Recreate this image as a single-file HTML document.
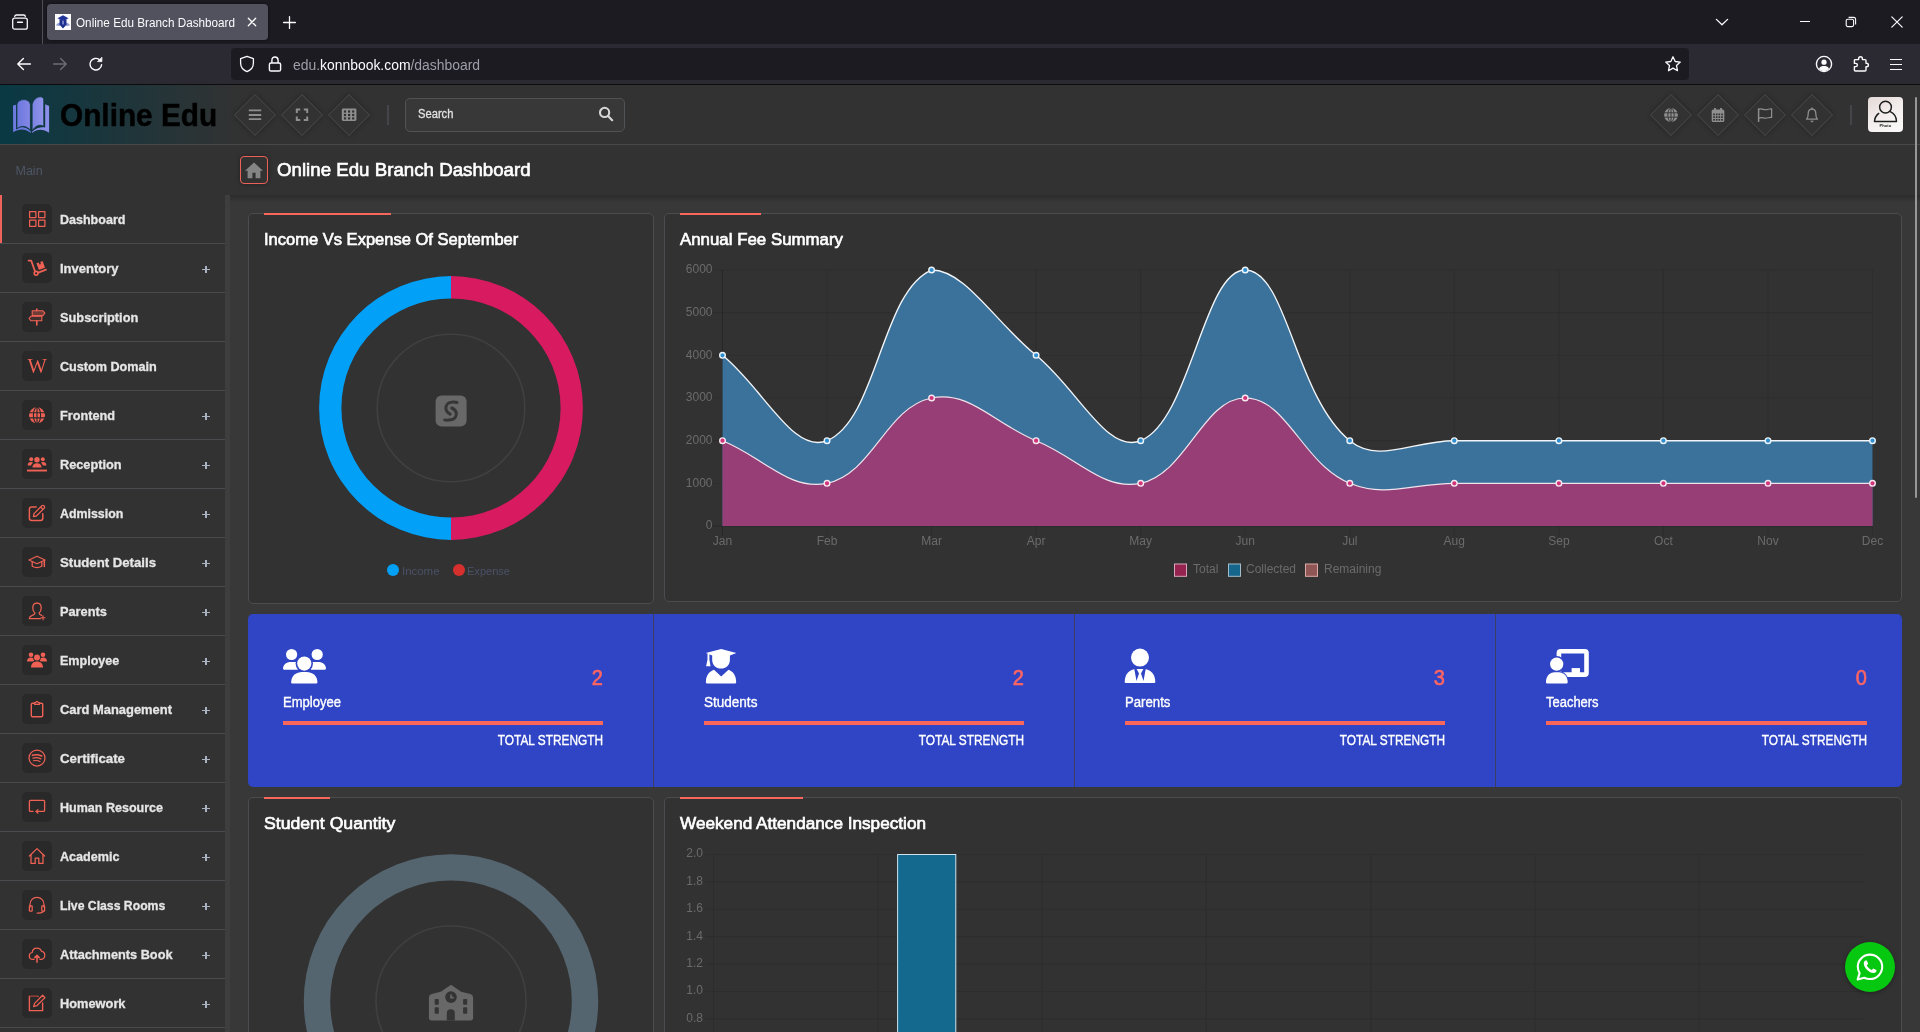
<!DOCTYPE html>
<html>
<head>
<meta charset="utf-8">
<title>Online Edu Branch Dashboard</title>
<style>
*{box-sizing:border-box;margin:0;padding:0}
html,body{width:1920px;height:1032px;overflow:hidden;background:#323232;font-family:"Liberation Sans",sans-serif;color:#fff}
.abs{position:absolute}
#root{position:relative;width:1920px;height:1032px;overflow:hidden;will-change:transform}
/* ---------- browser chrome ---------- */
#tabbar{left:0;top:0;width:1920px;height:44px;background:#1c1b22}
#tab{left:47px;top:4px;width:221px;height:36px;background:#52525e;border-radius:4px;box-shadow:0 0 3px rgba(0,0,0,.55)}
#tabtitle{left:76px;top:15px;font-size:12px;line-height:16px;color:#fbfbfe;white-space:nowrap;transform-origin:0 50%;transform:scaleX(.977)}
#navbar{left:0;top:44px;width:1920px;height:40px;background:#2b2a33}
#chromeline{left:0;top:84px;width:1920px;height:1px;background:#0c0c0d}
#urlbar{left:231px;top:48px;width:1458px;height:32px;background:#1c1b22;border-radius:4px}
#url{left:293px;top:56px;font-size:14px;line-height:18px;color:#9e9ea8;white-space:nowrap;transform-origin:0 50%;transform:scaleX(.993)}
#url b{font-weight:normal;color:#fbfbfe}
/* ---------- app ---------- */
#hdr{left:0;top:85px;width:1920px;height:59px;background:#323232}
#hdrgrad{left:0;top:85px;width:240px;height:59px;background:linear-gradient(90deg,#093944 0%,#323232 100%)}
#hdrline{left:0;top:144px;width:1920px;height:1px;background:#484848}
#side{left:0;top:145px;width:225px;height:887px;background:#323232}
#strip{left:225px;top:195px;width:5px;height:837px;background:#3e3e3e}
#subhdr{left:225px;top:145px;width:1695px;height:50px;background:#323232}
#content{left:230px;top:195px;width:1690px;height:837px;background:#383838}
#contentshadow{left:230px;top:195px;width:1690px;height:8px;background:linear-gradient(180deg,rgba(0,0,0,.22),rgba(0,0,0,0))}
.card{background:#323232;border:1px solid #4a4c50;border-radius:5px}
.accent{height:2px;background:#f8675b}
.ctitle{font-size:17.5px;font-weight:bold;color:#fff;white-space:nowrap;line-height:20px;transform-origin:0 50%}
.mi{left:0;width:225px;height:49px;border-bottom:1px solid #4a4b4f}
.mi .ib{position:absolute;left:22px;top:9px;width:30px;height:30px;border-radius:5px;background:#292929}
.mi .lb{position:absolute;left:60px;top:16px;font-size:13px;line-height:18px;font-weight:bold;color:#e6e6e6;-webkit-text-stroke:0.3px #e6e6e6;white-space:nowrap;transform-origin:0 50%}
.mi .pl{position:absolute;left:202px;top:22px;width:8px;height:7px}
.mi .pl:before{content:"";position:absolute;left:0;top:2.9px;width:8.2px;height:1.4px;background:#a9b3c2}
.mi .pl:after{content:"";position:absolute;left:3px;top:0;width:2px;height:7.2px;background:#a9b3c2}
.dia{width:30px;height:30px;border:1.4px solid #434343;transform:rotate(45deg);box-shadow:0 0 5px rgba(0,0,0,.3);background:#323232}
.ax{font-size:12px;line-height:14px;color:#6b6b6b;white-space:nowrap}
.stat{top:614px;height:172px;background:#2f44c4}
.slabel{font-size:14px;font-weight:bold;color:#fff;white-space:nowrap;line-height:16px;transform-origin:0 50%}
.snum{font-size:22px;color:#ff5b5c;white-space:nowrap;line-height:24px;text-align:right}
.sbar{height:4px;background:#ff5b5c;width:320px;top:720px}
.stot{font-size:14px;font-weight:bold;color:#fff;white-space:nowrap;line-height:16px;text-align:right;transform-origin:100% 50%}
</style>
</head>
<body>
<div id="root">
<!-- BROWSER CHROME -->
<div id="tabbar" class="abs"></div>
<div id="tab" class="abs"></div>
<div id="tabtitle" class="abs">Online Edu Branch Dashboard</div>
<div id="navbar" class="abs"></div>
<div id="urlbar" class="abs"></div>
<div id="url" class="abs">edu.<b>konnbook.com</b>/dashboard</div>
<div id="chromeline" class="abs"></div>
<svg class="abs" style="left:10px;top:12px" width="20" height="20" viewBox="0 0 20 20" fill="none" stroke="#fbfbfe" stroke-width="1.3" stroke-linecap="round"><path d="M4.7 4.5 C4.7 3.5 5.4 3 6.4 3 H13.6 C14.6 3 15.3 3.5 15.3 4.5"/><rect x="2.7" y="6.2" width="14.6" height="11" rx="2"/><path d="M7.6 10.2 H12.4" stroke-width="1.5"/></svg>
<div class="abs" style="left:42px;top:0;width:1px;height:44px;background:#4f4e58"></div>
<svg class="abs" style="left:55px;top:14px" width="16" height="16" viewBox="0 0 16 16"><rect width="16" height="16" fill="#fdfdff"/><path d="M1 11.6 C2 9 3.6 8.4 5.4 9.6 L5 12 Z M15 11.6 C14 9 12.4 8.4 10.6 9.6 L11 12 Z" fill="#8f9cd6"/><path d="M8 1.3 L13.5 4.2 L8 7 L2.5 4.2 Z" fill="#1f3398"/><path d="M4.6 5 L8 6.8 L11.4 5 L11.6 10.6 L8 14.4 L4.4 10.6 Z" fill="#1c2f8f"/><rect x="7.3" y="6.8" width="1.5" height="3.8" rx="0.7" fill="#8c9ad8"/></svg>
<svg class="abs" style="left:245px;top:15px" width="14" height="14" viewBox="0 0 14 14" stroke="#fbfbfe" stroke-width="1.3" stroke-linecap="round"><path d="M3.3 3.3 L10.7 10.7 M10.7 3.3 L3.3 10.7"/></svg>
<svg class="abs" style="left:282px;top:15px" width="15" height="15" viewBox="0 0 15 15" stroke="#fbfbfe" stroke-width="1.3" stroke-linecap="round"><path d="M7.5 1.6 V13.4 M1.6 7.5 H13.4"/></svg>
<svg class="abs" style="left:1714px;top:14px" width="16" height="16" viewBox="0 0 16 16" fill="none" stroke="#fbfbfe" stroke-width="1.3" stroke-linecap="round" stroke-linejoin="round"><path d="M2.4 5.4 L8 10.8 L13.6 5.4"/></svg>
<div class="abs" style="left:1800px;top:21px;width:10px;height:1px;background:#fbfbfe"></div>
<svg class="abs" style="left:1845px;top:16px" width="12" height="12" viewBox="0 0 12 12" fill="none" stroke="#fbfbfe" stroke-width="1.1"><rect x="1.2" y="3.2" width="7.4" height="7.4" rx="1.6"/><path d="M3.6 1.4 H8.6 Q10.6 1.4 10.6 3.4 V8.4"/></svg>
<svg class="abs" style="left:1890px;top:15px" width="14" height="14" viewBox="0 0 14 14" stroke="#fbfbfe" stroke-width="1.2" stroke-linecap="round"><path d="M1.8 1.8 L12.2 12.2 M12.2 1.8 L1.8 12.2"/></svg>
<svg class="abs" style="left:16px;top:56px" width="16" height="16" viewBox="0 0 16 16" fill="none" stroke="#fbfbfe" stroke-width="1.4" stroke-linecap="round" stroke-linejoin="round"><path d="M14.4 8 H2 M7.4 2.4 L1.8 8 L7.4 13.6"/></svg>
<svg class="abs" style="left:52px;top:56px" width="16" height="16" viewBox="0 0 16 16" fill="none" stroke="#6d6d78" stroke-width="1.4" stroke-linecap="round" stroke-linejoin="round"><path d="M1.6 8 H14 M8.6 2.4 L14.2 8 L8.6 13.6"/></svg>
<svg class="abs" style="left:88px;top:56px" width="16" height="16" viewBox="0 0 16 16" fill="none" stroke="#fbfbfe" stroke-width="1.4" stroke-linecap="round" stroke-linejoin="round"><path d="M13.6 8.6 A5.8 5.8 0 1 1 11.4 3.6"/><path d="M13.9 1.6 V5.6 H9.9 Z" fill="#fbfbfe" stroke-width="0.8"/></svg>
<svg class="abs" style="left:239px;top:55px" width="16" height="18" viewBox="0 0 16 18" fill="none" stroke="#fbfbfe" stroke-width="1.3" stroke-linejoin="round"><path d="M8 1.4 L14.4 3.6 V8 C14.4 12.2 11.6 15.2 8 16.6 C4.4 15.2 1.6 12.2 1.6 8 V3.6 Z"/></svg>
<svg class="abs" style="left:267px;top:55px" width="16" height="18" viewBox="0 0 16 18" fill="none" stroke="#fbfbfe" stroke-width="1.4" stroke-linejoin="round"><rect x="2.4" y="8" width="11.2" height="8" rx="1.6"/><path d="M4.9 8 V5.2 C4.9 3.2 6.2 2 8 2 C9.8 2 11.1 3.2 11.1 5.2 V8"/></svg>
<svg class="abs" style="left:1664px;top:55px" width="18" height="18" viewBox="0 0 18 18" fill="none" stroke="#fbfbfe" stroke-width="1.3" stroke-linejoin="round"><path d="M9 1.8 L11.2 6.5 L16.3 7.1 L12.5 10.6 L13.5 15.7 L9 13.1 L4.5 15.7 L5.5 10.6 L1.7 7.1 L6.8 6.5 Z"/></svg>
<svg class="abs" style="left:1815px;top:55px" width="18" height="18" viewBox="0 0 18 18" fill="none" stroke="#fbfbfe" stroke-width="1.4"><circle cx="9" cy="9" r="7.6"/><circle cx="9" cy="7.2" r="2.6" fill="#fbfbfe" stroke="none"/><path d="M4 13.4 C5 11.4 7 11 9 11 C11 11 13 11.4 14 13.4 C12.6 15.4 10.8 16 9 16 C7.2 16 5.4 15.4 4 13.4 Z" fill="#fbfbfe" stroke="none"/></svg>
<svg class="abs" style="left:1852px;top:55px" width="18" height="18" viewBox="0 0 18 18" fill="none" stroke="#fbfbfe" stroke-width="1.4" stroke-linejoin="round"><path d="M6.6 4.6 V3.8 C6.6 2.6 7.4 1.8 8.5 1.8 C9.6 1.8 10.4 2.6 10.4 3.8 V4.6 H13 Q14 4.6 14 5.6 V8.2 H14.6 C15.8 8.2 16.4 9 16.4 10 C16.4 11 15.8 11.8 14.6 11.8 H14 V15 Q14 16 13 16 H3.4 Q2.4 16 2.4 15 V11.6 H3.6 C4.8 11.6 5.4 10.9 5.4 10 C5.4 9.1 4.8 8.4 3.6 8.4 H2.4 V5.6 Q2.4 4.6 3.4 4.6 Z"/></svg>
<div class="abs" style="left:1890px;top:58.5px;width:12px;height:1.4px;background:#fbfbfe"></div>
<div class="abs" style="left:1890px;top:63.5px;width:12px;height:1.4px;background:#fbfbfe"></div>
<div class="abs" style="left:1890px;top:68.5px;width:12px;height:1.4px;background:#fbfbfe"></div>

<!-- APP HEADER -->
<div id="hdr" class="abs"></div>
<div id="hdrgrad" class="abs"></div>
<div id="hdrline" class="abs"></div>
<svg class="abs" style="left:12px;top:95px" width="39" height="40" viewBox="0 0 39 40">
<defs><linearGradient id="bk" x1="0" y1="0" x2="1" y2="0"><stop offset="0" stop-color="#6a76de"/><stop offset="1" stop-color="#8689e6"/></linearGradient>
<linearGradient id="bk2" x1="0" y1="0" x2="1" y2="0"><stop offset="0" stop-color="#7b82e2"/><stop offset="1" stop-color="#9093ea"/></linearGradient></defs>
<path d="M1 10.6 L4 9.8 V34.4 C9 31 14 32 18.8 36.4 V38 C13 33.4 7 33.6 1.2 37.3 Z" fill="#6d7ae0"/>
<path d="M37.1 11 L33.2 9.3 V32.4 C29 31.6 24 33 20.2 36.4 V38 C25 33.8 31 33.6 37.1 37.7 Z" fill="#8c8fe9"/>
<path d="M4.9 9.6 C5.5 3.4 17.6 2.4 18.4 9.6 V35.2 C15 31.4 10 29.6 4.9 33.8 Z" fill="url(#bk)" stroke="#0e3a44" stroke-width="0.9"/>
<path d="M20.1 9.6 C21 5 25 1.6 28.4 1.8 C30.4 1.9 31.8 3 31.8 5 V31.4 C27 28.6 22.6 31.6 20.1 36.2 Z" fill="url(#bk2)" stroke="#10393f" stroke-width="0.9"/>
</svg>
<div class="abs" style="left:60px;top:96px;font-size:32px;line-height:38px;font-weight:bold;color:#000;-webkit-text-stroke:0.5px #000;white-space:nowrap;transform-origin:0 50%;transform:scaleX(0.9308)">Online Edu</div>
<div class="abs dia" style="left:240px;top:100px"></div><svg class="abs" style="left:245px;top:105px" width="20" height="20" viewBox="0 0 20 20" fill="none" stroke="#8f8f8f" stroke-width="1.5"><path d="M3.8 5.4 H16.2 M3.8 10 H16.2 M3.8 14.1 H16.2" stroke-width="1.8"/></svg>
<div class="abs dia" style="left:287px;top:100px"></div><svg class="abs" style="left:292px;top:105px" width="20" height="20" viewBox="0 0 20 20" fill="none" stroke="#8f8f8f" stroke-width="1.5"><path d="M4.8 8 V4.6 H8.2 M11.8 4.6 H15.2 V8 M15.2 11.6 V15 H11.8 M8.2 15 H4.8 V11.6" stroke-width="2"/></svg>
<div class="abs dia" style="left:334px;top:100px"></div><svg class="abs" style="left:339px;top:105px" width="20" height="20" viewBox="0 0 20 20" fill="none" stroke="#8f8f8f" stroke-width="1.5"><rect x="2.8" y="3.6" width="14.6" height="12.4" rx="1.4" fill="#8f8f8f" stroke="none"/><g fill="#323232" stroke="none"><rect x="4.9" y="5.4" width="2.2" height="2.2"/><rect x="4.9" y="8.9" width="2.2" height="2.2"/><rect x="4.9" y="12.3" width="2.2" height="2.2"/><rect x="9.0" y="5.4" width="2.2" height="2.2"/><rect x="9.0" y="8.9" width="2.2" height="2.2"/><rect x="9.0" y="12.3" width="2.2" height="2.2"/><rect x="13.1" y="5.4" width="2.2" height="2.2"/><rect x="13.1" y="8.9" width="2.2" height="2.2"/><rect x="13.1" y="12.3" width="2.2" height="2.2"/></g></svg>
<div class="abs" style="left:387px;top:105px;width:2px;height:20px;background:#434548"></div>
<div class="abs" style="left:405px;top:98px;width:220px;height:34px;border:1px solid #505356;border-radius:5px;background:#383838"></div>
<div class="abs" style="left:418px;top:106px;font-size:12.5px;line-height:16px;color:#e2e2e2;-webkit-text-stroke:0.3px #e2e2e2;white-space:nowrap;transform-origin:0 50%;transform:scaleX(0.8937)">Search</div>
<svg class="abs" style="left:597px;top:105px" width="18" height="18" viewBox="0 0 18 18" fill="none" stroke="#d8d8d8" stroke-width="2.1" stroke-linecap="round"><circle cx="7.6" cy="7.4" r="4.6"/><path d="M11 10.9 L15.2 15.2"/></svg>
<div class="abs dia" style="left:1656px;top:100px"></div><svg class="abs" style="left:1661px;top:105px" width="20" height="20" viewBox="0 0 20 20" fill="none" stroke="#8f8f8f" stroke-width="1.5"><circle cx="10" cy="10" r="6.9" fill="#8f8f8f" stroke="none"/><g stroke="#323232" stroke-width="0.9"><path d="M3 7.8 H17 M3 12.2 H17 M10 3 V17"/><ellipse cx="10" cy="10" rx="3.2" ry="6.9"/></g></svg>
<div class="abs dia" style="left:1703px;top:100px"></div><svg class="abs" style="left:1708px;top:105px" width="20" height="20" viewBox="0 0 20 20" fill="none" stroke="#8f8f8f" stroke-width="1.5"><path d="M7 3 V5.4 M13 3 V5.4" stroke-width="1.8"/><rect x="3.7" y="4.6" width="12.6" height="12.4" rx="1.6" fill="#8f8f8f" stroke="none"/><g fill="#323232" stroke="none"><rect x="5.15" y="8.55" width="1.7" height="1.7"/><rect x="5.15" y="11.25" width="1.7" height="1.7"/><rect x="5.15" y="13.950000000000001" width="1.7" height="1.7"/><rect x="7.85" y="8.55" width="1.7" height="1.7"/><rect x="7.85" y="11.25" width="1.7" height="1.7"/><rect x="7.85" y="13.950000000000001" width="1.7" height="1.7"/><rect x="10.450000000000001" y="8.55" width="1.7" height="1.7"/><rect x="10.450000000000001" y="11.25" width="1.7" height="1.7"/><rect x="10.450000000000001" y="13.950000000000001" width="1.7" height="1.7"/><rect x="13.15" y="8.55" width="1.7" height="1.7"/><rect x="13.15" y="11.25" width="1.7" height="1.7"/><rect x="13.15" y="13.950000000000001" width="1.7" height="1.7"/></g></svg>
<div class="abs dia" style="left:1750px;top:100px"></div><svg class="abs" style="left:1755px;top:105px" width="20" height="20" viewBox="0 0 20 20" fill="none" stroke="#8f8f8f" stroke-width="1.5"><path d="M3.6 3.4 V17" stroke-width="1.5"/><path d="M3.6 4.4 C6.6 2.8 9 5.4 12 4.6 C13.8 4.2 15.4 3.6 16.6 3.8 V12.4 C14.4 12 12.4 13.6 10 13.2 C7.4 12.8 5.8 12 3.6 13.4" stroke-width="1.2"/></svg>
<div class="abs dia" style="left:1797px;top:100px"></div><svg class="abs" style="left:1802px;top:105px" width="20" height="20" viewBox="0 0 20 20" fill="none" stroke="#8f8f8f" stroke-width="1.5"><path d="M4.6 14.2 C6 12.6 6.2 11.4 6.2 8.8 C6.2 6 7.8 4.2 10 4.2 C12.2 4.2 13.8 6 13.8 8.8 C13.8 11.4 14 12.6 15.4 14.2 Z" stroke-width="1.3" stroke-linejoin="round"/><path d="M10 4.2 V3" stroke-width="1.4" stroke-linecap="round"/><path d="M8.6 16 H11.4 L10 17.2 Z" fill="#8f8f8f" stroke-width="0.6"/></svg>
<div class="abs" style="left:1850px;top:105px;width:2px;height:20px;background:#434548"></div>
<div class="abs" style="left:1868px;top:97px;width:35px;height:35px;border-radius:4px;background:linear-gradient(150deg,#e4d9d6 0%,#f3eeed 50%,#fbfafa 100%)"></div>
<svg class="abs" style="left:1868px;top:97px" width="35" height="35" viewBox="0 0 35 35" fill="none" stroke="#1c1c1c" stroke-width="1.45" stroke-linecap="round" stroke-linejoin="round"><circle cx="17.5" cy="10.1" r="5.9"/><path d="M10.7 16.4 C8 18.6 6.6 21.4 6.5 24.5 H28.5 C28.4 20 26 16.4 22.2 14.7"/><text x="17.4" y="30.1" text-anchor="middle" font-family="Liberation Sans, sans-serif" font-weight="bold" font-size="4.1" fill="#222" stroke="none">Photo</text></svg>

<!-- SIDEBAR -->
<div id="side" class="abs"></div>
<div id="subhdr" class="abs"></div>
<div id="content" class="abs"></div>
<div id="strip" class="abs"></div>
<div id="contentshadow" class="abs"></div>
<div class="abs" style="left:15.5px;top:164px;font-size:12.5px;line-height:15px;color:#4d5566;white-space:nowrap">Main</div>
<div class="abs" style="left:0;top:195px;width:2px;height:49px;background:#f0635a"></div>
<div class="abs mi" style="top:195px"><div class="ib"><svg class="abs" style="left:0;top:0" width="30" height="30" viewBox="0 0 30 30" fill="none" stroke="#ef6154" stroke-width="1.25" stroke-linecap="round" stroke-linejoin="round" stroke-linejoin="miter"><rect x="7.6" y="7.5" width="6.3" height="6.1"/><rect x="16.6" y="7.5" width="6.3" height="6.1"/><rect x="7.6" y="16.2" width="6.3" height="6.1"/><rect x="16.6" y="16.2" width="6.3" height="6.1"/></svg></div><div class="lb" style="transform:scaleX(0.9631);">Dashboard</div></div>
<div class="abs mi" style="top:244px"><div class="ib"><svg class="abs" style="left:0;top:0" width="30" height="30" viewBox="0 0 30 30" fill="none" stroke="#ef6154" stroke-width="1.25" stroke-linecap="round" stroke-linejoin="round" ><g transform="translate(0.4,-2.4)"><path d="M6.2 10 L8.8 10 L12.6 20.8" stroke-width="1.7"/><circle cx="13.7" cy="22.7" r="1.9" stroke-width="1.6"/><path d="M16 22 L23.6 19" stroke-width="1.7"/><path d="M14 12.6 L16.3 11.8 L17.1 14 L18.6 13.5 L17.8 11.3 L20.2 10.4 L22.6 17.2 L16.5 19.5 Z" fill="#ef6154" stroke="none"/></g></svg></div><div class="lb" style="transform:scaleX(1.0014);">Inventory</div><div class="pl"></div></div>
<div class="abs mi" style="top:293px"><div class="ib"><svg class="abs" style="left:0;top:0" width="30" height="30" viewBox="0 0 30 30" fill="none" stroke="#ef6154" stroke-width="1.25" stroke-linecap="round" stroke-linejoin="round" ><path d="M14.8 7 V8.6 M14.8 18.8 V23" stroke-width="1.6"/><path d="M10.2 8.8 H20.9 L22.9 11.2 L20.9 13.6 H10.2 Z" fill="rgba(239,97,84,.35)" stroke-width="1.1"/><path d="M19.8 14.2 H9 L7 16.5 L9 18.8 H19.8 Z" fill="rgba(239,97,84,.12)" stroke-width="1.1"/></svg></div><div class="lb" style="transform:scaleX(0.9855);">Subscription</div></div>
<div class="abs mi" style="top:342px"><div class="ib"><div class="abs" style="left:4.6px;top:3px;width:21px;text-align:center;font-family:'Liberation Serif',serif;font-size:20.5px;line-height:24px;color:#ef6154">W</div></div><div class="lb" style="transform:scaleX(0.9712);">Custom Domain</div></div>
<div class="abs mi" style="top:391px"><div class="ib"><svg class="abs" style="left:0;top:0" width="30" height="30" viewBox="0 0 30 30" fill="none" stroke="#ef6154" stroke-width="1.25" stroke-linecap="round" stroke-linejoin="round" ><circle cx="15" cy="15.3" r="8" fill="#ef6154" stroke="none"/><g stroke="#292929" stroke-width="1.1" fill="none"><path d="M7 12.7 H23 M7 17.9 H23"/><ellipse cx="15" cy="15.3" rx="3.6" ry="8"/><path d="M15 7.3 V23.3"/></g></svg></div><div class="lb" style="transform:scaleX(0.9764);">Frontend</div><div class="pl"></div></div>
<div class="abs mi" style="top:440px"><div class="ib"><svg class="abs" style="left:0;top:0" width="30" height="30" viewBox="0 0 30 30" fill="none" stroke="#ef6154" stroke-width="1.25" stroke-linecap="round" stroke-linejoin="round" ><g fill="#ef6154" stroke="none"><circle cx="15" cy="10.8" r="2.7"/><circle cx="9.2" cy="10.2" r="2"/><circle cx="20.8" cy="10.2" r="2"/><path d="M10.4 18.6 C10.4 15.6 12.4 14.2 15 14.2 C17.6 14.2 19.6 15.6 19.6 18.6 Z"/><path d="M5.6 16.4 C5.6 14.2 7 13 9 13 C9.9 13 10.7 13.3 11.2 13.8 C10 14.5 9.3 15.5 9.1 16.4 Z"/><path d="M24.4 16.4 C24.4 14.2 23 13 21 13 C20.1 13 19.3 13.3 18.8 13.8 C20 14.5 20.7 15.5 20.9 16.4 Z"/><rect x="5" y="20.6" width="20" height="1.9"/></g></svg></div><div class="lb" style="transform:scaleX(0.9786);">Reception</div><div class="pl"></div></div>
<div class="abs mi" style="top:489px"><div class="ib"><svg class="abs" style="left:0;top:0" width="30" height="30" viewBox="0 0 30 30" fill="none" stroke="#ef6154" stroke-width="1.25" stroke-linecap="round" stroke-linejoin="round" ><path d="M14.2 9 H9.6 Q7.4 9 7.4 11.2 V20.2 Q7.4 22.4 9.6 22.4 H18.6 Q20.8 22.4 20.8 20.2 V15.8" stroke-width="1.5"/><path d="M11.4 18.6 L12 15.6 L19.9 7.7 Q20.9 6.9 21.9 7.8 L22.3 8.2 Q23.1 9.2 22.3 10.1 L14.4 18 Z M18.6 9 L21 11.4" stroke-width="1.3"/></svg></div><div class="lb" style="transform:scaleX(0.9523);">Admission</div><div class="pl"></div></div>
<div class="abs mi" style="top:538px"><div class="ib"><svg class="abs" style="left:0;top:0" width="30" height="30" viewBox="0 0 30 30" fill="none" stroke="#ef6154" stroke-width="1.25" stroke-linecap="round" stroke-linejoin="round" ><path d="M15 9.2 L23 13 L15 16.8 L7 13 Z"/><path d="M10.2 14.8 V19.3 Q15 21.8 19.8 19.3 V14.8"/><path d="M22.3 13.4 V19.6" stroke-width="1.5"/></svg></div><div class="lb" style="transform:scaleX(1.0145);">Student Details</div><div class="pl"></div></div>
<div class="abs mi" style="top:587px"><div class="ib"><svg class="abs" style="left:0;top:0" width="30" height="30" viewBox="0 0 30 30" fill="none" stroke="#ef6154" stroke-width="1.25" stroke-linecap="round" stroke-linejoin="round" ><path d="M15 7.2 C12.3 7.2 10.8 9.2 10.8 12 C10.8 14.2 11.6 15.9 12.9 16.9 C12.9 18.4 11.6 18.9 9.8 19.6 C8 20.3 7.3 21 7.3 22.6 H18.4"/><path d="M15 7.2 C17.7 7.2 19.2 9.2 19.2 12 C19.2 14.2 18.4 15.9 17.1 16.9 C17.1 18.3 18.2 18.8 19.6 19.4"/><path d="M21 19.8 V23.8 M19 21.8 H23" stroke-width="1.1"/></svg></div><div class="lb" style="transform:scaleX(0.9811);">Parents</div><div class="pl"></div></div>
<div class="abs mi" style="top:636px"><div class="ib"><svg class="abs" style="left:0;top:0" width="30" height="30" viewBox="0 0 30 30" fill="none" stroke="#ef6154" stroke-width="1.25" stroke-linecap="round" stroke-linejoin="round" ><g fill="#ef6154" stroke="none"><circle cx="15" cy="12.4" r="3"/><circle cx="9" cy="9.8" r="2.3"/><circle cx="21" cy="9.8" r="2.3"/><path d="M9 22.6 C9 18.6 11.6 16.6 15 16.6 C18.4 16.6 21 18.6 21 22.6 Z"/><path d="M5 16.6 C5 13.8 6.7 12.6 9 12.6 C9.9 12.6 10.7 12.8 11.3 13.2 C11.3 14.4 11.8 15.4 12.4 16 C11.6 16.2 10.9 16.4 10.4 16.6 Z"/><path d="M25 16.6 C25 13.8 23.3 12.6 21 12.6 C20.1 12.6 19.3 12.8 18.7 13.2 C18.7 14.4 18.2 15.4 17.6 16 C18.4 16.2 19.1 16.4 19.6 16.6 Z"/></g></svg></div><div class="lb" style="transform:scaleX(0.9638);">Employee</div><div class="pl"></div></div>
<div class="abs mi" style="top:685px"><div class="ib"><svg class="abs" style="left:0;top:0" width="30" height="30" viewBox="0 0 30 30" fill="none" stroke="#ef6154" stroke-width="1.25" stroke-linecap="round" stroke-linejoin="round" ><path d="M12.4 9.2 H10.6 Q9.3 9.2 9.3 10.5 V21.4 Q9.3 22.7 10.6 22.7 H19.4 Q20.7 22.7 20.7 21.4 V10.5 Q20.7 9.2 19.4 9.2 H17.6" stroke-width="1.4"/><path d="M12.6 10.4 V8.6 H13.8 Q14 7.4 15 7.4 Q16 7.4 16.2 8.6 H17.4 V10.4 Z" stroke-width="1.2"/></svg></div><div class="lb" style="transform:scaleX(0.9938);">Card Management</div><div class="pl"></div></div>
<div class="abs mi" style="top:734px"><div class="ib"><svg class="abs" style="left:0;top:0" width="30" height="30" viewBox="0 0 30 30" fill="none" stroke="#ef6154" stroke-width="1.25" stroke-linecap="round" stroke-linejoin="round" ><circle cx="15" cy="15" r="8"/><path d="M10.4 12.3 Q15 10.9 19.8 13" stroke-width="1.5"/><path d="M10.9 15.1 Q15 14 18.9 15.8" stroke-width="1.3"/><path d="M11.4 17.8 Q15 16.9 18 18.4" stroke-width="1.1"/></svg></div><div class="lb" style="transform:scaleX(1.0224);">Certificate</div><div class="pl"></div></div>
<div class="abs mi" style="top:783px"><div class="ib"><svg class="abs" style="left:0;top:0" width="30" height="30" viewBox="0 0 30 30" fill="none" stroke="#ef6154" stroke-width="1.25" stroke-linecap="round" stroke-linejoin="round" ><path d="M11 19.4 H8.4 Q7.4 19.4 7.4 18.4 V9.4 Q7.4 8.4 8.4 8.4 H21.6 Q22.6 8.4 22.6 9.4 V18.4 Q22.6 19.4 21.6 19.4 H14.2" stroke-width="1.3"/><path d="M16 17.6 L14 19.4 L16 21.2" stroke-width="1.2"/></svg></div><div class="lb" style="transform:scaleX(0.9633);">Human Resource</div><div class="pl"></div></div>
<div class="abs mi" style="top:832px"><div class="ib"><svg class="abs" style="left:0;top:0" width="30" height="30" viewBox="0 0 30 30" fill="none" stroke="#ef6154" stroke-width="1.25" stroke-linecap="round" stroke-linejoin="round" ><path d="M7.4 15 L15 7.6 L22.6 15"/><path d="M9 14 V22.4 H13.2 V17.2 H16.8 V22.4 H21 V14"/></svg></div><div class="lb" style="transform:scaleX(0.9687);">Academic</div><div class="pl"></div></div>
<div class="abs mi" style="top:881px"><div class="ib"><svg class="abs" style="left:0;top:0" width="30" height="30" viewBox="0 0 30 30" fill="none" stroke="#ef6154" stroke-width="1.25" stroke-linecap="round" stroke-linejoin="round" ><path d="M8 17 V14.4 C8 10.2 11 7.4 15 7.4 C19 7.4 22 10.2 22 14.4 V17"/><rect x="7.4" y="15.8" width="2.8" height="5.4" rx="0.6"/><rect x="19.8" y="15.8" width="2.8" height="5.4" rx="0.6"/><path d="M21.6 21.4 Q19.4 23.2 15.2 23.2" stroke-width="1.3"/></svg></div><div class="lb" style="transform:scaleX(0.9402);">Live Class Rooms</div><div class="pl"></div></div>
<div class="abs mi" style="top:930px"><div class="ib"><svg class="abs" style="left:0;top:0" width="30" height="30" viewBox="0 0 30 30" fill="none" stroke="#ef6154" stroke-width="1.25" stroke-linecap="round" stroke-linejoin="round" ><path d="M12 20.4 H11 C8.8 20.4 7.3 18.9 7.3 16.9 C7.3 15.1 8.6 13.7 10.2 13.5 C10.4 10.9 12.4 9 15 9 C17.2 9 19 10.4 19.6 12.4 C21.4 12.6 22.8 14.2 22.8 16.2 C22.8 18.6 21 20.4 18.8 20.4 H18"/><path d="M15 23.2 V16.6 M12.8 18.6 L15 16.4 L17.2 18.6" stroke-width="1.5"/></svg></div><div class="lb" style="transform:scaleX(0.9795);">Attachments Book</div><div class="pl"></div></div>
<div class="abs mi" style="top:979px"><div class="ib"><svg class="abs" style="left:0;top:0" width="30" height="30" viewBox="0 0 30 30" fill="none" stroke="#ef6154" stroke-width="1.25" stroke-linecap="round" stroke-linejoin="round" ><path d="M16 8.4 H7.4 V22.6 H20.6 V15" stroke-linejoin="miter" stroke-width="1.4"/><path d="M11.6 18.6 L12.6 15.4 L20.6 7.2 L23 9.6 L14.8 17.7 Z" stroke-width="1.3"/><path d="M8.4 8.4 H15" stroke="#8c3a33" stroke-width="1.4"/></svg></div><div class="lb" style="transform:scaleX(0.9854);">Homework</div><div class="pl"></div></div>
<div class="abs mi" style="top:1028px"><div class="ib"></div><div class="lb" style="transform:scaleX(0.9542);">Exams</div><div class="pl"></div></div>

<div class="abs" style="left:240px;top:156px;width:28px;height:28px;border:1px solid #ee6157;border-radius:4px;box-shadow:0 0 4px rgba(0,0,0,.35)"></div>
<svg class="abs" style="left:244px;top:161px" width="20" height="19" viewBox="0 0 20 19"><path d="M10 1.6 L19 9.8 H16.4 V17.2 H11.6 V11.8 H8.4 V17.2 H3.6 V9.8 H1 Z" fill="#858585"/></svg>
<div class="abs" style="left:277px;top:159px;font-size:18.8px;line-height:22px;color:#fff;-webkit-text-stroke:0.65px #fff;white-space:nowrap;transform-origin:0 50%;transform:scaleX(0.9955)">Online Edu Branch Dashboard</div>

<div class="abs card" style="left:248px;top:213px;width:406px;height:391px"></div>
<div class="abs accent" style="left:264px;top:213px;width:127px"></div>
<div class="abs" style="left:264px;top:229.5px;font-size:17px;line-height:20px;color:#fff;-webkit-text-stroke:0.65px #fff;white-space:nowrap;transform-origin:0 50%;transform:scaleX(0.9715)">Income Vs Expense Of September</div>
<svg class="abs" style="left:311.1px;top:267.5px" width="280" height="280" viewBox="-140 -140 280 280"><path d="M0 -131.9 A131.9 131.9 0 0 1 0 131.9 L0 109.6 A109.6 109.6 0 0 0 0 -109.6 Z" fill="#d81b60"/><path d="M0 -131.9 A131.9 131.9 0 0 0 0 131.9 L0 109.6 A109.6 109.6 0 0 1 0 -109.6 Z" fill="#03a0f7"/><circle cx="0" cy="0" r="73.8" fill="none" stroke="#404040" stroke-width="1.6"/><rect x="-15.4" y="-12.6" width="31" height="31.2" rx="6" fill="#686868"/><path d="M6 -5.5 C3 -6.5 1.5 -6 0.2 -5.8 C-3 -5.5 -5.1 -3 -5.1 0.3 C-5.1 3.5 -3 5 -0.8 6.1 M-6.3 11.9 C-3.5 12.5 -1.5 12 0.2 11.7 C3.5 11.3 5.3 8.8 5.3 6.1 C5.3 3 3 1 0.7 0" fill="none" stroke="#363636" stroke-width="3" stroke-linecap="round"/></svg>
<div class="abs" style="left:387px;top:564px;width:12px;height:12px;border-radius:6px;background:#03a0f7"></div>
<div class="abs" style="left:452.5px;top:564px;width:12px;height:12px;border-radius:6px;background:#d6302e"></div>
<div class="abs" style="left:402px;top:564px;font-size:11.5px;line-height:14px;color:#4a5268;white-space:nowrap;transform-origin:0 50%;transform:scaleX(0.9942)">Income</div>
<div class="abs" style="left:467px;top:564px;font-size:11.5px;line-height:14px;color:#4a5268;white-space:nowrap;transform-origin:0 50%;transform:scaleX(0.9606)">Expense</div>
<div class="abs card" style="left:664px;top:213px;width:1238px;height:389px"></div>
<div class="abs accent" style="left:680px;top:213px;width:81px"></div>
<div class="abs" style="left:680px;top:229.5px;font-size:17px;line-height:20px;color:#fff;-webkit-text-stroke:0.65px #fff;white-space:nowrap;transform-origin:0 50%;transform:scaleX(0.9914)">Annual Fee Summary</div>
<svg class="abs" style="left:664px;top:213px" width="1238" height="391" viewBox="664 213 1238 391"><path d="M722.5 270 V536M827.0 270 V536M931.6 270 V536M1036.1 270 V536M1140.7 270 V536M1245.2 270 V536M1349.8 270 V536M1454.3 270 V536M1558.9 270 V536M1663.4 270 V536M1768.0 270 V536M1872.5 270 V536M712.5 483.3 H1872.5M712.5 440.7 H1872.5M712.5 398.0 H1872.5M712.5 355.3 H1872.5M712.5 312.7 H1872.5M712.5 270.0 H1872.5" stroke="#2d2d2d" stroke-width="1" fill="none"/><path d="M712.5 526 H1872.5 M722.5 270 V536" stroke="#262626" stroke-width="1" fill="none"/><path d="M722.5 355.3C764.3 389.5 793.4 454.4 827.0 440.7C877.0 420.3 881.6 290.4 931.6 270.0C965.3 270.0 994.3 321.2 1036.1 355.3C1078.0 389.5 1107.0 454.4 1140.7 440.7C1190.6 420.3 1203.4 270.0 1245.2 270.0C1287.0 270.0 1294.8 395.8 1349.8 440.7C1378.5 464.1 1412.5 440.7 1454.3 440.7C1496.1 440.7 1517.0 440.7 1558.9 440.7C1600.7 440.7 1621.6 440.7 1663.4 440.7C1705.2 440.7 1726.1 440.7 1768.0 440.7C1809.8 440.7 1830.7 440.7 1872.5 440.7L1872.5 526 L722.5 526Z" fill="#3b729c"/><path d="M722.5 440.7C764.3 457.7 788.9 491.1 827.0 483.3C872.6 474.0 886.1 407.3 931.6 398.0C969.7 390.2 994.3 423.6 1036.1 440.7C1078.0 457.7 1102.6 491.1 1140.7 483.3C1186.2 474.0 1203.4 398.0 1245.2 398.0C1287.0 398.0 1302.6 464.1 1349.8 483.3C1386.3 498.2 1412.5 483.3 1454.3 483.3C1496.1 483.3 1517.0 483.3 1558.9 483.3C1600.7 483.3 1621.6 483.3 1663.4 483.3C1705.2 483.3 1726.1 483.3 1768.0 483.3C1809.8 483.3 1830.7 483.3 1872.5 483.3L1872.5 526 L722.5 526Z" fill="#973e77"/><path d="M722.5 355.3C764.3 389.5 793.4 454.4 827.0 440.7C877.0 420.3 881.6 290.4 931.6 270.0C965.3 270.0 994.3 321.2 1036.1 355.3C1078.0 389.5 1107.0 454.4 1140.7 440.7C1190.6 420.3 1203.4 270.0 1245.2 270.0C1287.0 270.0 1294.8 395.8 1349.8 440.7C1378.5 464.1 1412.5 440.7 1454.3 440.7C1496.1 440.7 1517.0 440.7 1558.9 440.7C1600.7 440.7 1621.6 440.7 1663.4 440.7C1705.2 440.7 1726.1 440.7 1768.0 440.7C1809.8 440.7 1830.7 440.7 1872.5 440.7" fill="none" stroke="#f2f5f8" stroke-width="1.35"/><path d="M722.5 440.7C764.3 457.7 788.9 491.1 827.0 483.3C872.6 474.0 886.1 407.3 931.6 398.0C969.7 390.2 994.3 423.6 1036.1 440.7C1078.0 457.7 1102.6 491.1 1140.7 483.3C1186.2 474.0 1203.4 398.0 1245.2 398.0C1287.0 398.0 1302.6 464.1 1349.8 483.3C1386.3 498.2 1412.5 483.3 1454.3 483.3C1496.1 483.3 1517.0 483.3 1558.9 483.3C1600.7 483.3 1621.6 483.3 1663.4 483.3C1705.2 483.3 1726.1 483.3 1768.0 483.3C1809.8 483.3 1830.7 483.3 1872.5 483.3" fill="none" stroke="#efe4ec" stroke-width="1.2"/><circle cx="722.5" cy="355.3" r="2.8" fill="#2f8fd0" stroke="#eef4f9" stroke-width="1.4"/><circle cx="827.0" cy="440.7" r="2.8" fill="#2f8fd0" stroke="#eef4f9" stroke-width="1.4"/><circle cx="931.6" cy="270.0" r="2.8" fill="#2f8fd0" stroke="#eef4f9" stroke-width="1.4"/><circle cx="1036.1" cy="355.3" r="2.8" fill="#2f8fd0" stroke="#eef4f9" stroke-width="1.4"/><circle cx="1140.7" cy="440.7" r="2.8" fill="#2f8fd0" stroke="#eef4f9" stroke-width="1.4"/><circle cx="1245.2" cy="270.0" r="2.8" fill="#2f8fd0" stroke="#eef4f9" stroke-width="1.4"/><circle cx="1349.8" cy="440.7" r="2.8" fill="#2f8fd0" stroke="#eef4f9" stroke-width="1.4"/><circle cx="1454.3" cy="440.7" r="2.8" fill="#2f8fd0" stroke="#eef4f9" stroke-width="1.4"/><circle cx="1558.9" cy="440.7" r="2.8" fill="#2f8fd0" stroke="#eef4f9" stroke-width="1.4"/><circle cx="1663.4" cy="440.7" r="2.8" fill="#2f8fd0" stroke="#eef4f9" stroke-width="1.4"/><circle cx="1768.0" cy="440.7" r="2.8" fill="#2f8fd0" stroke="#eef4f9" stroke-width="1.4"/><circle cx="1872.5" cy="440.7" r="2.8" fill="#2f8fd0" stroke="#eef4f9" stroke-width="1.4"/><circle cx="722.5" cy="440.7" r="2.8" fill="#d1337a" stroke="#f6e8ef" stroke-width="1.4"/><circle cx="827.0" cy="483.3" r="2.8" fill="#d1337a" stroke="#f6e8ef" stroke-width="1.4"/><circle cx="931.6" cy="398.0" r="2.8" fill="#d1337a" stroke="#f6e8ef" stroke-width="1.4"/><circle cx="1036.1" cy="440.7" r="2.8" fill="#d1337a" stroke="#f6e8ef" stroke-width="1.4"/><circle cx="1140.7" cy="483.3" r="2.8" fill="#d1337a" stroke="#f6e8ef" stroke-width="1.4"/><circle cx="1245.2" cy="398.0" r="2.8" fill="#d1337a" stroke="#f6e8ef" stroke-width="1.4"/><circle cx="1349.8" cy="483.3" r="2.8" fill="#d1337a" stroke="#f6e8ef" stroke-width="1.4"/><circle cx="1454.3" cy="483.3" r="2.8" fill="#d1337a" stroke="#f6e8ef" stroke-width="1.4"/><circle cx="1558.9" cy="483.3" r="2.8" fill="#d1337a" stroke="#f6e8ef" stroke-width="1.4"/><circle cx="1663.4" cy="483.3" r="2.8" fill="#d1337a" stroke="#f6e8ef" stroke-width="1.4"/><circle cx="1768.0" cy="483.3" r="2.8" fill="#d1337a" stroke="#f6e8ef" stroke-width="1.4"/><circle cx="1872.5" cy="483.3" r="2.8" fill="#d1337a" stroke="#f6e8ef" stroke-width="1.4"/><rect x="1174.5" y="564" width="12" height="12.3" fill="#95224f" stroke="#d9a7bb" stroke-width="1"/><rect x="1228.5" y="564" width="12" height="12.3" fill="#15658d" stroke="#a4bdcb" stroke-width="1"/><rect x="1305.5" y="564" width="12" height="12.3" fill="#905656" stroke="#dcaaa8" stroke-width="1"/></svg>
<div class="abs ax" style="left:652px;width:60.5px;text-align:right;top:518px">0</div>
<div class="abs ax" style="left:652px;width:60.5px;text-align:right;top:476px">1000</div>
<div class="abs ax" style="left:652px;width:60.5px;text-align:right;top:433px">2000</div>
<div class="abs ax" style="left:652px;width:60.5px;text-align:right;top:390px">3000</div>
<div class="abs ax" style="left:652px;width:60.5px;text-align:right;top:348px">4000</div>
<div class="abs ax" style="left:652px;width:60.5px;text-align:right;top:305px">5000</div>
<div class="abs ax" style="left:652px;width:60.5px;text-align:right;top:262px">6000</div>
<div class="abs ax" style="left:692.5px;width:60px;text-align:center;top:534px">Jan</div>
<div class="abs ax" style="left:797.0px;width:60px;text-align:center;top:534px">Feb</div>
<div class="abs ax" style="left:901.6px;width:60px;text-align:center;top:534px">Mar</div>
<div class="abs ax" style="left:1006.1px;width:60px;text-align:center;top:534px">Apr</div>
<div class="abs ax" style="left:1110.7px;width:60px;text-align:center;top:534px">May</div>
<div class="abs ax" style="left:1215.2px;width:60px;text-align:center;top:534px">Jun</div>
<div class="abs ax" style="left:1319.8px;width:60px;text-align:center;top:534px">Jul</div>
<div class="abs ax" style="left:1424.3px;width:60px;text-align:center;top:534px">Aug</div>
<div class="abs ax" style="left:1528.9px;width:60px;text-align:center;top:534px">Sep</div>
<div class="abs ax" style="left:1633.4px;width:60px;text-align:center;top:534px">Oct</div>
<div class="abs ax" style="left:1738.0px;width:60px;text-align:center;top:534px">Nov</div>
<div class="abs ax" style="left:1842.5px;width:60px;text-align:center;top:534px">Dec</div>
<div class="abs ax" style="left:1193px;top:562px">Total</div>
<div class="abs ax" style="left:1246px;top:562px">Collected</div>
<div class="abs ax" style="left:1324px;top:562px">Remaining</div>

<div class="abs" style="left:248px;top:614px;width:1654px;height:173px;background:#2f45c5;border-radius:5px"></div>
<div class="abs" style="left:653px;top:614px;width:1px;height:173px;background:#3a3f63"></div>
<div class="abs" style="left:1074px;top:614px;width:1px;height:173px;background:#3a3f63"></div>
<div class="abs" style="left:1495px;top:614px;width:1px;height:173px;background:#3a3f63"></div>
<svg class="abs" style="left:283px;top:648px" width="45" height="37" viewBox="0 0 45 37" fill="#fff"><circle cx="8.6" cy="6.5" r="5.6"/><circle cx="34.2" cy="6.5" r="5.6"/><path d="M0 20.6 C0 16.4 3.6 13.9 7.6 13.9 H14.8 V21.7 H1.1 Q0 21.7 0 20.6 Z"/><path d="M43 20.6 C43 16.4 39.4 13.9 35.4 13.9 H28 V21.7 H41.9 Q43 21.7 43 20.6 Z"/><circle cx="21.3" cy="15.6" r="8.7" fill="#2f45c5"/><circle cx="21.3" cy="15.6" r="7.1"/><path d="M8.2 34.2 C8.2 27.6 13.6 24 19 24 H23.6 C29 24 34.4 27.6 34.4 34.2 Q34.4 35.4 33.2 35.4 H9.4 Q8.2 35.4 8.2 34.2 Z"/></svg>
<div class="abs" style="left:283px;top:694px;font-size:14px;line-height:16px;color:#fff;-webkit-text-stroke:0.35px #fff;white-space:nowrap;transform-origin:0 50%;transform:scaleX(0.9315)">Employee</div>
<div class="abs" style="left:543px;width:60px;top:665.5px;font-size:21.5px;line-height:24px;color:#ff6562;-webkit-text-stroke:0.6px #ff6562;text-align:right;transform-origin:100% 50%;transform:scaleX(.93)">2</div>
<div class="abs" style="left:283px;top:720.5px;width:320px;height:4px;background:#fb665b"></div>
<div class="abs" style="left:443px;width:160px;top:732px;font-size:14px;line-height:16px;color:#fff;-webkit-text-stroke:0.35px #fff;white-space:nowrap;text-align:right;transform-origin:100% 50%;transform:scaleX(0.8470)">TOTAL STRENGTH</div>
<svg class="abs" style="left:704px;top:648px" width="34" height="37" viewBox="0 0 34 37" fill="#fff"><path d="M1.9 5.1 L17.2 1 L32.4 5.1 L25.9 7.6 V12 C25.9 17 22 20.6 17.1 20.6 C12.2 20.6 8.2 17 8.2 12 V7.6 Z"/><path d="M3.5 6 H5.4 V11.4 L6.5 18.2 H2.1 L3.5 11.4 Z"/><path d="M1.9 34.2 C1.9 27.4 5.4 23.4 10 21.8 L17.2 28.4 L24.5 21.8 C29 23.4 32.2 27.4 32.2 34.2 Q32.2 35.4 31 35.4 H3.1 Q1.9 35.4 1.9 34.2 Z"/></svg>
<div class="abs" style="left:704px;top:694px;font-size:14px;line-height:16px;color:#fff;-webkit-text-stroke:0.35px #fff;white-space:nowrap;transform-origin:0 50%;transform:scaleX(0.9662)">Students</div>
<div class="abs" style="left:964px;width:60px;top:665.5px;font-size:21.5px;line-height:24px;color:#ff6562;-webkit-text-stroke:0.6px #ff6562;text-align:right;transform-origin:100% 50%;transform:scaleX(.93)">2</div>
<div class="abs" style="left:704px;top:720.5px;width:320px;height:4px;background:#fb665b"></div>
<div class="abs" style="left:864px;width:160px;top:732px;font-size:14px;line-height:16px;color:#fff;-webkit-text-stroke:0.35px #fff;white-space:nowrap;text-align:right;transform-origin:100% 50%;transform:scaleX(0.8470)">TOTAL STRENGTH</div>
<svg class="abs" style="left:1124px;top:648px" width="32" height="37" viewBox="0 0 32 37" fill="#fff"><circle cx="16" cy="9.6" r="9"/><path d="M0.7 34 C0.7 26 6 21.1 12 21.1 H20 C26 21.1 31.3 26 31.3 34 Q31.3 35.1 30.2 35.1 H1.8 Q0.7 35.1 0.7 34 Z"/><path d="M10.3 21 L12.4 20.6 L15 25.5 L12.5 33 Z M21.7 21 L19.6 20.6 L17 25.5 L19.5 33 Z" fill="#2f45c5"/></svg>
<div class="abs" style="left:1125px;top:694px;font-size:14px;line-height:16px;color:#fff;-webkit-text-stroke:0.35px #fff;white-space:nowrap;transform-origin:0 50%;transform:scaleX(0.9409)">Parents</div>
<div class="abs" style="left:1385px;width:60px;top:665.5px;font-size:21.5px;line-height:24px;color:#ff6562;-webkit-text-stroke:0.6px #ff6562;text-align:right;transform-origin:100% 50%;transform:scaleX(.93)">3</div>
<div class="abs" style="left:1125px;top:720.5px;width:320px;height:4px;background:#fb665b"></div>
<div class="abs" style="left:1285px;width:160px;top:732px;font-size:14px;line-height:16px;color:#fff;-webkit-text-stroke:0.35px #fff;white-space:nowrap;text-align:right;transform-origin:100% 50%;transform:scaleX(0.8470)">TOTAL STRENGTH</div>
<svg class="abs" style="left:1546px;top:648px" width="45" height="37" viewBox="0 0 45 37" fill="#fff"><path fill-rule="evenodd" d="M10.6 5 Q10.6 1 14.6 1 H38.8 Q42.8 1 42.8 5 V25 Q42.8 29 38.8 29 H14.6 Q10.6 29 10.6 25 Z M15.2 5.6 V24.3 H38.2 V5.6 Z"/><rect x="25.6" y="20.1" width="8.4" height="5"/><rect x="0" y="9.4" width="12" height="26" fill="#2f45c5"/><circle cx="10.7" cy="16.1" r="8" fill="#2f45c5"/><path d="M-1 36 C-1 27 4 23 9 23 H12.6 C17.6 23 23 27 23 36 Z" fill="#2f45c5"/><circle cx="10.7" cy="16.1" r="6.65"/><path d="M-0.1 34.2 C-0.1 27.6 4.4 24.2 8.6 24.2 H13 C17.2 24.2 21.7 27.6 21.7 34.2 Q21.7 35.4 20.5 35.4 H1.1 Q-0.1 35.4 -0.1 34.2 Z"/></svg>
<div class="abs" style="left:1546px;top:694px;font-size:14px;line-height:16px;color:#fff;-webkit-text-stroke:0.35px #fff;white-space:nowrap;transform-origin:0 50%;transform:scaleX(0.9259)">Teachers</div>
<div class="abs" style="left:1807px;width:60px;top:665.5px;font-size:21.5px;line-height:24px;color:#ff6562;-webkit-text-stroke:0.6px #ff6562;text-align:right;transform-origin:100% 50%;transform:scaleX(.93)">0</div>
<div class="abs" style="left:1546px;top:720.5px;width:321px;height:4px;background:#fb665b"></div>
<div class="abs" style="left:1707px;width:160px;top:732px;font-size:14px;line-height:16px;color:#fff;-webkit-text-stroke:0.35px #fff;white-space:nowrap;text-align:right;transform-origin:100% 50%;transform:scaleX(0.8470)">TOTAL STRENGTH</div>

<div class="abs card" style="left:248px;top:797px;width:406px;height:300px"></div>
<div class="abs accent" style="left:264px;top:797px;width:66px"></div>
<div class="abs" style="left:264px;top:814px;font-size:17px;line-height:20px;color:#fff;-webkit-text-stroke:0.65px #fff;white-space:nowrap;transform-origin:0 50%;transform:scaleX(1.0368)">Student Quantity</div>
<svg class="abs" style="left:291px;top:840px" width="320" height="192" viewBox="-160 -160 320 192"><circle cx="0" cy="1.4" r="134" fill="none" stroke="#55656f" stroke-width="26.4"/><circle cx="0" cy="1" r="75" fill="none" stroke="#404040" stroke-width="1.6"/><path d="M0 -15.2 L10.2 -8.2 L19.4 -5.9 Q22.1 -5.2 22.1 -2.6 V17.8 Q22.1 20.5 19.4 20.5 H-19.4 Q-22.1 20.5 -22.1 17.8 V-2.6 Q-22.1 -5.2 -19.4 -5.9 L-10.2 -8.2 Z" fill="#686868"/><circle cx="0" cy="-2.9" r="5.8" fill="#343434"/><path d="M0 -5.4 V-2.3 H2.8" stroke="#686868" stroke-width="1.7" fill="none"/><g fill="#343434"><rect x="-16.3" y="-1.1" width="4.1" height="5.8" rx="0.8"/><rect x="-16.3" y="7.2" width="4.1" height="6.5" rx="0.8"/><rect x="12.1" y="-1.1" width="4.1" height="5.8" rx="0.8"/><rect x="12.1" y="7.2" width="4.1" height="6.5" rx="0.8"/><path d="M-4.2 20.6 V13.2 A4 4 0 0 1 3.8 13.2 V20.6 Z"/></g></svg>
<div class="abs card" style="left:664px;top:797px;width:1238px;height:300px"></div>
<div class="abs accent" style="left:680px;top:797px;width:123px"></div>
<div class="abs" style="left:680px;top:814px;font-size:17px;line-height:20px;color:#fff;-webkit-text-stroke:0.65px #fff;white-space:nowrap;transform-origin:0 50%;transform:scaleX(1.0101)">Weekend Attendance Inspection</div>
<svg class="abs" style="left:664px;top:797px" width="1238" height="235" viewBox="664 797 1238 235"><path d="M713.5 854.5 V1040M877.8 854.5 V1040M1042.1 854.5 V1040M1206.4 854.5 V1040M1370.7 854.5 V1040M1535.0 854.5 V1040M1699.3 854.5 V1040M705.5 854.5 H1863.6M705.5 881.9 H1863.6M705.5 909.3 H1863.6M705.5 936.7 H1863.6M705.5 964.1 H1863.6M705.5 991.5 H1863.6M705.5 1018.9 H1863.6M705.5 1046.3 H1863.6" stroke="#2d2d2d" stroke-width="1" fill="none"/><rect x="897.6" y="854.5" width="58.2" height="200" fill="#14698f" stroke="#cfe3ee" stroke-width="1"/></svg>
<div class="abs ax" style="left:643px;width:60px;text-align:right;top:846px">2.0</div>
<div class="abs ax" style="left:643px;width:60px;text-align:right;top:874px">1.8</div>
<div class="abs ax" style="left:643px;width:60px;text-align:right;top:901px">1.6</div>
<div class="abs ax" style="left:643px;width:60px;text-align:right;top:929px">1.4</div>
<div class="abs ax" style="left:643px;width:60px;text-align:right;top:956px">1.2</div>
<div class="abs ax" style="left:643px;width:60px;text-align:right;top:983px">1.0</div>
<div class="abs ax" style="left:643px;width:60px;text-align:right;top:1011px">0.8</div>

<div class="abs" style="left:1915px;top:97px;width:2.2px;height:401px;background:#979797;border-radius:1px"></div><div class="abs" style="left:1845px;top:942px;width:50px;height:50px;border-radius:25px;background:#07c810;box-shadow:0 1px 4px rgba(0,0,0,.35)"></div><svg class="abs" style="left:1855px;top:952px" width="30" height="30" viewBox="0 0 30 30" fill="none"><path d="M15 2.6 C8.2 2.6 2.8 8 2.8 14.7 C2.8 17 3.4 19.2 4.6 21.1 L2.6 27.6 L9.3 25.7 C11 26.6 13 27 15 27 C21.8 27 27.2 21.5 27.2 14.8 C27.2 8 21.8 2.6 15 2.6 Z" stroke="#fff" stroke-width="2.1" stroke-linejoin="round"/><path d="M10.6 8.6 C9.6 8.8 8.8 10 8.8 11.4 C8.8 15.4 14 21 18.6 21 C20 21 21.2 20 21.4 19 L21.4 18 L18.2 16.4 L16.8 18 C14.6 17.2 12.6 15.2 11.8 13.2 L13.2 11.8 L11.8 8.6 Z" fill="#fff"/></svg>
</div>
</body>
</html>
